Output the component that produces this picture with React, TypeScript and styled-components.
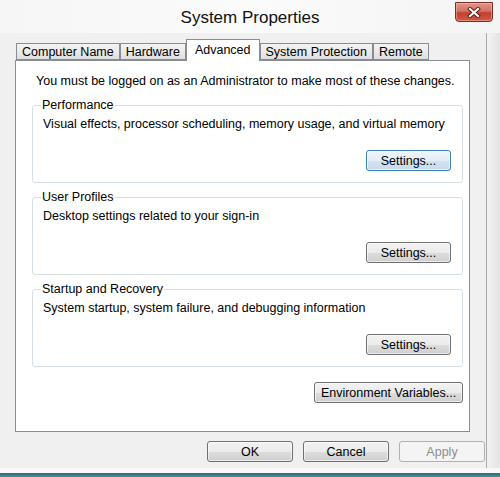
import React from "react";
import styled, { createGlobalStyle } from "styled-components";

const GlobalStyle = createGlobalStyle`
  html, body {
    margin: 0;
    padding: 0;
  }
  body {
    font-family: "Liberation Sans", Arial, sans-serif;
    font-size: 12.5px;
    color: #000;
  }
`;

const TABS = ["Computer Name", "Hardware", "Advanced", "System Protection", "Remote"];

const GROUPS = [
  {
    title: "Performance",
    text: "Visual effects, processor scheduling, memory usage, and virtual memory",
    focused: true,
  },
  { title: "User Profiles", text: "Desktop settings related to your sign-in" },
  {
    title: "Startup and Recovery",
    text: "System startup, system failure, and debugging information",
  },
];

const App = () => {
  return (
    <>
      <GlobalStyle />
      <Window>
        <TitleBar>
          <Title>System Properties</Title>
          <CloseButton aria-label="Close">
            <svg width="14" height="11" viewBox="0 0 14 11">
              <path d="M3 2 L11 9 M11 2 L3 9" stroke="#5a1a14" strokeWidth="4" strokeLinecap="square" />
              <path d="M3 2 L11 9 M11 2 L3 9" stroke="#fff" strokeWidth="2.2" strokeLinecap="square" />
            </svg>
          </CloseButton>
        </TitleBar>
        <Body>
          <Client>
            <TabRow>
              {TABS.map((t) => (
                <Tab key={t} $active={t === "Advanced"}>
                  {t}
                </Tab>
              ))}
            </TabRow>
            <Panel>
              <Notice>You must be logged on as an Administrator to make most of these changes.</Notice>
              <Groups>
                {GROUPS.map((g) => (
                  <Group key={g.title}>
                    <Legend>{g.title}</Legend>
                    <GroupText>{g.text}</GroupText>
                    <ButtonRow>
                      <Button $w={85} $focused={g.focused}>
                        Settings...
                      </Button>
                    </ButtonRow>
                  </Group>
                ))}
              </Groups>
              <EnvRow>
                <Button $w={149}>Environment Variables...</Button>
              </EnvRow>
            </Panel>
            <DialogButtons>
              <Button $w={86}>OK</Button>
              <Button $w={86}>Cancel</Button>
              <Button $w={86} disabled>
                Apply
              </Button>
            </DialogButtons>
          </Client>
          <RightFrame />
        </Body>
        <BottomFrame />
      </Window>
    </>
  );
};

const Window = styled.div`
  width: 500px;
  height: 477px;
  display: flex;
  flex-direction: column;
  background: #f0f0f0;
  overflow: hidden;
`;

const TitleBar = styled.div`
  height: 33px;
  flex-shrink: 0;
  display: grid;
  grid-template-columns: 1fr auto 1fr;
  align-items: start;
  background: linear-gradient(90deg, #f6f6f6 0%, #fbfbfb 50%, #f4f4f4 100%);
`;

const Title = styled.h1`
  grid-column: 2;
  margin: 8px 0 0;
  font-size: 17px;
  font-weight: normal;
  line-height: 20px;
  color: #111;
`;

const CloseButton = styled.div`
  grid-column: 3;
  justify-self: end;
  width: 38px;
  height: 20px;
  margin: 2px 7px 0 0;
  box-sizing: border-box;
  border: 1px solid #7b2c25;
  border-radius: 0 0 4px 4px;
  background: linear-gradient(#e0968c 0%, #d47164 45%, #c2402f 55%, #cf5a46 100%);
  box-shadow: inset 0 0 0 1px rgba(255, 200, 190, 0.45);
  display: flex;
  align-items: center;
  justify-content: center;
`;

const Body = styled.div`
  flex: 1;
  display: flex;
  min-height: 0;
`;

const Client = styled.div`
  flex: 1;
  display: flex;
  flex-direction: column;
  padding: 6px 1px 0 15px;
`;

const RightFrame = styled.div`
  width: 13px;
  border-left: 1px solid #a9a9a9;
  background: linear-gradient(90deg, #f2f2f2, #e4e4e4);
`;

const BottomFrame = styled.div`
  height: 9px;
  flex-shrink: 0;
  background: linear-gradient(#f8f8f8 0 5px, #2f6a7c 5px, #4f8a9b 100%);
`;

const TabRow = styled.div`
  display: flex;
  align-items: flex-end;
  height: 21px;
  padding-left: 1px;
  position: relative;
  z-index: 1;
`;

const Tab = styled.div<{ $active?: boolean }>`
  box-sizing: border-box;
  height: ${({ $active }) => ($active ? "22px" : "17px")};
  margin-bottom: ${({ $active }) => ($active ? "-1px" : "0")};
  padding: ${({ $active }) => ($active ? "3px 8px 0" : "1px 5px 0")};
  border: 1px solid #898c95;
  border-bottom: ${({ $active }) => ($active ? "none" : "1px solid #898c95")};
  background: ${({ $active }) =>
    $active ? "#fff" : "linear-gradient(#f3f3f3 0%, #ebebeb 50%, #dedede 100%)"};
  line-height: 14px;
  white-space: nowrap;
`;

const Panel = styled.div`
  width: 455px;
  height: 372px;
  box-sizing: border-box;
  border: 1px solid #898c95;
  background: #fff;
  display: flex;
  flex-direction: column;
  padding: 13px 6px 0 16px;
`;

const Notice = styled.div`
  line-height: 15px;
  padding-left: 4px;
  white-space: nowrap;
`;

const Groups = styled.div`
  display: flex;
  flex-direction: column;
  gap: 7px;
  margin-top: 9px;
`;

const Group = styled.fieldset`
  margin: 0;
  padding: 5px 11px 11px 10px;
  border: 1px solid #d5dfe5;
  border-radius: 3px;
  min-width: 0;
`;

const Legend = styled.legend`
  padding: 0 1px;
  margin-left: -2px;
  line-height: 14px;
`;

const GroupText = styled.div`
  line-height: 15px;
  white-space: nowrap;
`;

const ButtonRow = styled.div`
  display: flex;
  justify-content: flex-end;
  margin-top: 18px;
`;

const EnvRow = styled.div`
  display: flex;
  justify-content: flex-end;
  margin-top: 15px;
`;

const DialogButtons = styled.div`
  display: flex;
  justify-content: flex-end;
  gap: 10px;
  margin-top: 9px;
`;

const Button = styled.button<{ $w: number; $focused?: boolean }>`
  width: ${({ $w }) => $w}px;
  height: 21px;
  padding: 0;
  font-family: "Liberation Sans", Arial, sans-serif;
  font-size: 12.5px;
  color: #000;
  border: 1px solid ${({ $focused }) => ($focused ? "#3c7fb1" : "#707070")};
  border-radius: 3px;
  background: ${({ $focused }) =>
    $focused
      ? "linear-gradient(#eef5fa 0%, #e2edf6 50%, #d2e3f0 51%, #c6dbec 100%)"
      : "linear-gradient(#f2f2f2 0%, #ebebeb 50%, #dddddd 51%, #cfcfcf 100%)"};
  box-shadow: inset 0 0 0 1px rgba(255, 255, 255, 0.6);

  &:disabled {
    color: #8d8d8d;
    border-color: #adb2b5;
    background: #f4f4f4;
    box-shadow: none;
  }
`;

export default App;
